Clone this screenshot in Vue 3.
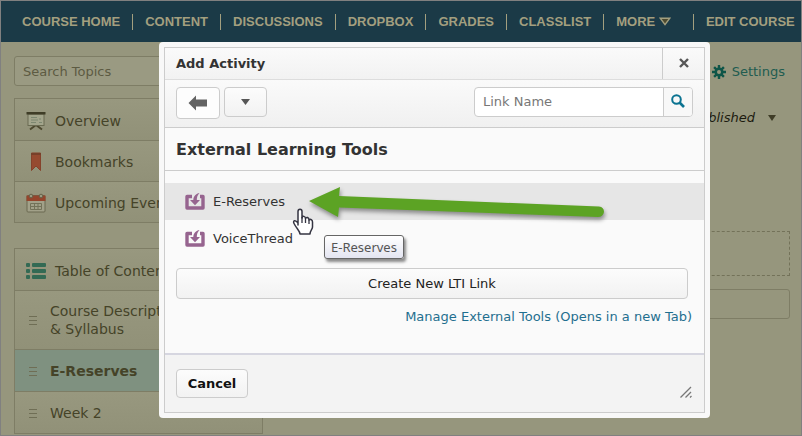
<template>
  <div class="page">
    <nav class="navbar">
      <a v-for="item in navItems" :key="item" href="#" class="nav-link">{{ item }}</a>
      <a href="#" class="nav-link">
        MORE
        <svg class="nav-caret" width="12" height="9" viewBox="0 0 12 9">
          <path d="M1.2 1.2H10.8L6 7.6Z" fill="#4d4a2f" stroke="#a39f7f" stroke-width="1.4" />
        </svg>
      </a>
      <a href="#" class="nav-link nav-edit">EDIT COURSE</a>
    </nav>

    <div class="columns">
      <aside class="sidebar">
        <input class="topic-search" type="text" placeholder="Search Topics" aria-label="Search Topics">

        <div class="panel">
          <a href="#" class="panel-row">
            <svg width="20" height="20" viewBox="0 0 20 20">
              <path d="M4 18.5L10 14L16 18.5" fill="none" stroke="#4e4a30" stroke-width="2" />
              <rect x="2" y="3" width="16" height="11.5" fill="#a3a58c" stroke="#6a6b52" />
              <rect x="0.5" y="1" width="19" height="2.5" fill="#3f3d27" />
              <path d="M5 6.5H11M5 9H12M5 11.5H10M14 7V9M13 11.5H16" stroke="#7c8770" />
            </svg>
            <span>Overview</span>
          </a>
          <a href="#" class="panel-row">
            <svg width="20" height="20" viewBox="0 0 20 20">
              <path d="M5.5 1H14.5V18.5L10 14L5.5 18.5Z" fill="#964a30" stroke="#85422b" />
              <path d="M5 2H15" stroke="#78402a" stroke-width="2" />
            </svg>
            <span>Bookmarks</span>
          </a>
          <a href="#" class="panel-row">
            <svg width="20" height="20" viewBox="0 0 20 20">
              <rect x="1" y="2.5" width="18" height="16.5" rx="1" fill="#a2a189" stroke="#6a6951" />
              <path d="M0.5 2.5H19.5V8H0.5Z" fill="#95452c" />
              <g fill="#9c9b82" stroke="#66634a">
                <circle cx="5" cy="3" r="1.8" />
                <circle cx="15" cy="3" r="1.8" />
              </g>
              <path d="M4.5 10.5H15.5M4.5 13.5H15.5M4.5 16.5H15.5M4.5 10.5V16.5M8.5 10.5V16.5M12 10.5V16.5M15.5 10.5V16.5" fill="none" stroke="#737259" />
            </svg>
            <span>Upcoming Events</span>
          </a>
        </div>

        <div class="panel">
          <a href="#" class="panel-row">
            <svg width="20" height="20" viewBox="0 0 20 20" fill="#336a54">
              <rect x="0" y="2" width="4" height="4" rx="1" />
              <rect x="6" y="2" width="14" height="4" rx="1" />
              <rect x="0" y="8" width="4" height="4" rx="1" />
              <rect x="6" y="8" width="14" height="4" rx="1" />
              <rect x="0" y="14" width="4" height="4" rx="1" />
              <rect x="6" y="14" width="14" height="4" rx="1" />
            </svg>
            <span>Table of Contents</span>
          </a>
          <a
            v-for="topic in topics"
            :key="topic.name"
            href="#"
            class="panel-row topic"
            :class="{ active: topic.active }"
          >
            <svg width="8" height="10" viewBox="0 0 8 10">
              <path d="M0 1.5H8M0 5.5H8M0 9.5H8" stroke="#6f6e55" />
            </svg>
            <span>{{ topic.name }}</span>
          </a>
        </div>
      </aside>

      <main class="content">
        <a href="#" class="settings">
          <svg width="14" height="14" viewBox="0 0 14 14">
            <g stroke="#0e5548" stroke-width="2.4">
              <path d="M7 0V14M0 7H14M2.1 2.1L11.9 11.9M11.9 2.1L2.1 11.9" />
            </g>
            <circle cx="7" cy="7" r="4.5" fill="#0e5548" />
            <circle cx="7" cy="7" r="2" fill="#96967d" />
          </svg>
          Settings
        </a>
        <button type="button" class="published">
          Published
          <svg width="8" height="6" viewBox="0 0 8 6"><path d="M0 0H8L4 6Z" fill="#3f3d27" /></svg>
        </button>
        <div class="dropzone"></div>
        <div class="module-box"></div>
      </main>
    </div>

    <div class="overlay">
      <section class="modal" role="dialog" aria-labelledby="modal-title">
        <div class="modal-inner">
          <header class="modal-header">
            <h2 id="modal-title">Add Activity</h2>
            <button type="button" class="close" aria-label="Close">
              <svg width="10" height="10" viewBox="0 0 10 10">
                <path d="M1 1L9 9M9 1L1 9" stroke="#565656" stroke-width="2.4" />
              </svg>
            </button>
          </header>

          <div class="toolbar">
            <button type="button" class="btn back" aria-label="Back">
              <svg width="20" height="16" viewBox="0 0 20 16">
                <path d="M0.5 8L8 0.5V4.5H19V11.5H8V15.5Z" fill="#636363" />
              </svg>
            </button>
            <button type="button" class="btn more" aria-label="More options">
              <svg width="9" height="6" viewBox="0 0 9 6"><path d="M0 0H9L4.5 6Z" fill="#565656" /></svg>
            </button>
            <form class="link-search" @submit.prevent>
              <input v-model="linkName" type="text" placeholder="Link Name" aria-label="Link Name">
              <button type="submit" aria-label="Search">
                <svg width="14" height="14" viewBox="0 0 14 14" fill="none" stroke="#0b7391">
                  <circle cx="5.5" cy="5.5" r="4.3" stroke-width="2" />
                  <path d="M8.5 8.5L13 13" stroke-width="2.6" />
                </svg>
              </button>
            </form>
          </div>

          <div class="modal-body">
            <h3>External Learning Tools</h3>
            <ul class="tools">
              <li v-for="tool in tools" :key="tool.name">
                <a href="#" :class="{ hovered: tool.hovered }">
                  <svg width="20" height="18" viewBox="0 0 20 18">
                    <path d="M7 3.5H2V15H18V3.5H15" fill="none" stroke="#96648f" stroke-width="3.4" stroke-linejoin="round" />
                    <path d="M14.5 0C11 0.5 8.5 3 8.3 7H5L10 12.2L15 7H11.8C11.8 4 12.7 1.7 14.5 0Z" fill="#96648f" />
                  </svg>
                  {{ tool.name }}
                </a>
              </li>
            </ul>
            <button type="button" class="btn create">Create New LTI Link</button>
            <a href="#" class="manage">Manage External Tools (Opens in a new Tab)</a>

            <svg class="arrow" width="302" height="40" viewBox="0 0 302 40">
              <path d="M1 17L32 3L31 12L291 22.5Q296 23 296 28Q295 33 290 33L31 23.5L30 33Z" fill="#5ca324" />
            </svg>
            <svg class="cursor" width="22" height="28" viewBox="0 0 22 28">
              <path
                d="M6 17V3.5C6 0.5 10 0.5 10 3.5V10C10.5 7.5 13.5 8 13.5 10.5C14.5 8.500 17 9.5 17 12C18.5 10.5 20.5 12 20.5 14V19C20.5 21.5 18 22.5 18 26H8C8 23 4.5 20.5 2 15.5C0.5 12.5 3.5 11.5 6 15Z"
                fill="#fff" stroke="#353542" stroke-width="1.5" stroke-linejoin="round"
              />
              <path d="M10 9V15M13.5 10.5V15M17 12V16" stroke="#353542" stroke-width="1.3" />
            </svg>
            <div class="tooltip" role="tooltip">E-Reserves</div>
          </div>

          <footer class="modal-footer">
            <button type="button" class="btn cancel">Cancel</button>
            <svg width="12" height="12" viewBox="0 0 12 12">
              <path d="M0.5 11.5L11 1M5.5 11.5L11 6M10 11.5L11.5 10" stroke="#777" stroke-width="1.3" />
            </svg>
          </footer>
        </div>
      </section>
    </div>
  </div>
</template>

<script setup>
  import { ref } from 'vue'

  const linkName = ref('')

  const navItems = ['COURSE HOME', 'CONTENT', 'DISCUSSIONS', 'DROPBOX', 'GRADES', 'CLASSLIST']

  const topics = [
    { name: 'Course Description & Syllabus' },
    { name: 'E-Reserves', active: true },
    { name: 'Week 2' }
  ]

  const tools = [
    { name: 'E-Reserves', hovered: true },
    { name: 'VoiceThread' }
  ]
</script>

<style>
body {
  margin: 0;
  background: #96967d;
}
</style>

<style scoped>
.page {
  position: relative;
  box-sizing: border-box;
  height: 100vh;
  overflow: hidden;
  border: 1px solid #808080;
  background: #96967d;
  color: #454328;
  font: 13px/18px "DejaVu Sans", Verdana, sans-serif;
}

.page * {
  box-sizing: border-box;
}

a {
  color: inherit;
  text-decoration: none;
}

button,
input {
  margin: 0;
  font: inherit;
}

svg {
  flex: none;
}

.navbar {
  display: flex;
  align-items: center;
  height: 41px;
  padding-left: 9px;
  background: #1b3a47;
  color: #a39f7f;
  font: bold 13px/16px "Liberation Sans", Arial, sans-serif;
  white-space: nowrap;
}

.nav-link {
  padding: 0 12px;
}

.nav-link + .nav-link {
  border-left: 1px solid #a39f7f;
}

.nav-edit {
  margin-left: 10px;
}

.columns {
  display: flex;
  gap: 12px;
  padding: 14px 11px 0 13px;
}

.sidebar {
  display: flex;
  flex-direction: column;
  flex: none;
  width: 249px;
}

.topic-search {
  height: 30px;
  margin-bottom: 12px;
  padding: 0 8px;
  border: 1px solid #7e7d65;
  border-radius: 3px;
  background: #9a9a82;
}

.topic-search::placeholder {
  color: #5d5b42;
  opacity: 1;
}

.panel {
  margin-bottom: 25px;
  border: 1px solid #7e7d65;
  font-size: 14px;
}

.panel-row {
  display: flex;
  align-items: center;
  gap: 9px;
  min-height: 41px;
  padding: 2px 11px 0;
  background: linear-gradient(#98987f, #919178);
}

.panel-row + .panel-row {
  border-top: 1px solid #7e7d65;
}

.topic {
  gap: 13px;
  min-height: 42px;
  padding: 11px 64px 11px 14px;
}

.topic.active {
  background: #7f9180;
  font-weight: bold;
}

.content {
  display: flex;
  flex: 1;
  flex-direction: column;
  align-items: flex-end;
}

.settings {
  display: flex;
  align-items: center;
  gap: 6px;
  margin: 7px 5px 28px 0;
  color: #215c50;
}

.published {
  display: flex;
  align-items: center;
  gap: 13px;
  margin: 0 14px 104px 0;
  padding: 0;
  border: 0;
  background: none;
  color: #1c1b10;
  font-style: italic;
}

.dropzone {
  align-self: stretch;
  height: 45px;
  margin-bottom: 13px;
  border: 1px dashed #737259;
}

.module-box {
  align-self: stretch;
  height: 30px;
  border: 1px solid #7e7d65;
  border-radius: 3px;
}

.overlay {
  position: absolute;
  inset: 0;
  padding: 41px 91px 17px 158px;
}

.modal {
  height: 100%;
  padding: 5px;
  border-radius: 4px;
  background: #f8f8f8;
}

.modal-inner {
  display: flex;
  flex-direction: column;
  height: 100%;
  border: 1px solid #ccc;
  background: #fafafa;
  color: #333;
}

.modal-header {
  display: flex;
  align-items: stretch;
  justify-content: space-between;
  height: 32px;
  border-bottom: 1px solid #ddd;
  background: linear-gradient(#fafafa, #f2f2f2);
}

.modal-header h2 {
  margin: 0;
  padding-left: 11px;
  font-size: 13px;
  line-height: 32px;
}

.close {
  width: 42px;
  padding: 0;
  border: 0;
  border-left: 1px solid #ccc;
  background: none;
}

.toolbar {
  display: flex;
  align-items: flex-start;
  gap: 4px;
  height: 48px;
  padding: 7px 11px 0;
  border-bottom: 1px solid #ccc;
  background: linear-gradient(#fafafa, #f0f0f0);
}

.btn {
  display: flex;
  align-items: center;
  justify-content: center;
  padding: 0;
  border: 1px solid #ccc;
  border-radius: 4px;
  background: linear-gradient(#fcfcfc, #f2f2f2);
  color: #222;
}

.back {
  width: 44px;
  height: 32px;
  background: #fdfdfd;
}

.more {
  width: 43px;
  height: 30px;
}

.link-search {
  display: flex;
  width: 219px;
  height: 30px;
  margin-left: auto;
  border: 1px solid #ccc;
  border-radius: 4px;
  background: #fff;
  overflow: hidden;
}

.link-search input {
  flex: 1;
  min-width: 0;
  padding: 0 8px;
  border: 0;
  background: none;
}

.link-search input::placeholder {
  color: #777;
  opacity: 1;
}

.link-search button {
  width: 29px;
  padding: 2px 0 0;
  border: 0;
  border-left: 1px solid #ccc;
  background: #f8f8f8;
}

.modal-body {
  position: relative;
  display: flex;
  flex: 1;
  flex-direction: column;
}

.modal-body h3 {
  margin: 0;
  padding: 2px 11px 0;
  border-bottom: 1px solid #ccc;
  font-size: 16px;
  line-height: 40px;
}

.tools {
  margin: 12px 0 11px;
  padding: 0;
  list-style: none;
}

.tools a {
  display: flex;
  align-items: center;
  gap: 8px;
  height: 37px;
  padding-left: 20px;
}

.tools .hovered {
  background: #e6e6e6;
}

.create {
  height: 31px;
  margin: 0 16px 9px 11px;
}

.manage {
  align-self: flex-end;
  margin-right: 12px;
  color: #1f6f8f;
}

.arrow {
  position: absolute;
  top: 56px;
  left: 143px;
  filter: drop-shadow(1px 3px 2px rgba(0, 0, 0, 0.4));
}

.cursor {
  position: absolute;
  top: 80px;
  left: 127px;
}

.tooltip {
  position: absolute;
  top: 107px;
  left: 159px;
  padding: 2px 6px;
  border: 1px solid #666;
  border-radius: 3px;
  background: linear-gradient(#fff, #e4e5f1);
  box-shadow: 2px 3px 3px rgba(0, 0, 0, 0.45);
  color: #555;
  font: 13px/18px "Noto Sans", Tahoma, sans-serif;
}

.modal-footer {
  display: flex;
  align-items: flex-end;
  justify-content: space-between;
  height: 59px;
  padding: 0 12px 14px 11px;
  border-top: 2px solid #d6d6e0;
  background: #f3f3f3;
}

.cancel {
  width: 72px;
  height: 29px;
  color: #111;
  font-weight: bold;
}
</style>
